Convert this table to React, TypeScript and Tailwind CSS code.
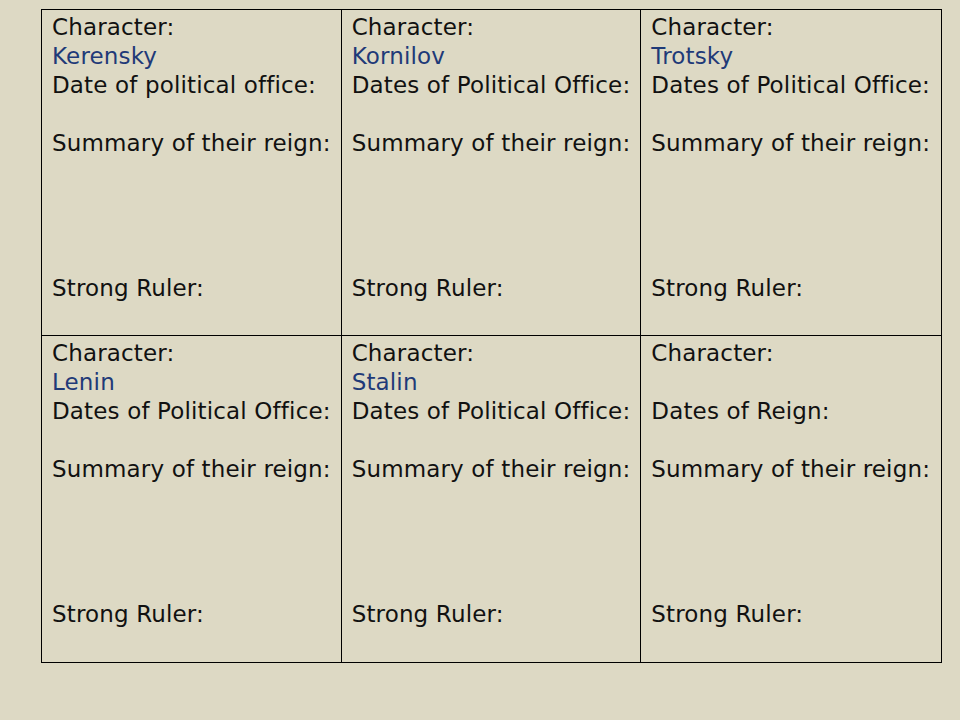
import React from 'react';

type Cell = {
  name: string;
  dates: string;
};

const cells: Cell[] = [
  { name: 'Kerensky', dates: 'Date of political office:' },
  { name: 'Kornilov', dates: 'Dates of Political Office:' },
  { name: 'Trotsky', dates: 'Dates of Political Office:' },
  { name: 'Lenin', dates: 'Dates of Political Office:' },
  { name: 'Stalin', dates: 'Dates of Political Office:' },
  { name: '', dates: 'Dates of Reign:' },
];

const Line: React.FC<{ children?: React.ReactNode; blue?: boolean }> = ({ children, blue }) => (
  <div className={`h-[29px] whitespace-nowrap ${blue ? 'text-[#1f3a78]' : 'text-[#111111]'}`}>
    {children}
  </div>
);

const CharacterCell: React.FC<{ cell: Cell; index: number }> = ({ cell, index }) => {
  const col = index % 3;
  const row = Math.floor(index / 3);
  return (
    <div
      className={`pl-[10px] pt-[3px] border-black ${col < 2 ? 'border-r' : ''} ${row === 0 ? 'border-b' : ''}`}
    >
      <Line>Character:</Line>
      <Line blue>{cell.name}</Line>
      <Line>{cell.dates}</Line>
      <Line />
      <Line>Summary of their reign:</Line>
      <Line />
      <Line />
      <Line />
      <Line />
      <Line>Strong Ruler:</Line>
    </div>
  );
};

export default function App() {
  return (
    <div className="w-[960px] h-[720px] bg-[#ddd9c4] pt-[9px] pl-[41px] font-['DejaVu_Sans',sans-serif] text-[23px] leading-[29px] tracking-[0.15px]">
      <div className="w-[901px] h-[654px] border border-black grid grid-cols-3 grid-rows-2">
        {cells.map((cell, i) => (
          <CharacterCell key={i} cell={cell} index={i} />
        ))}
      </div>
    </div>
  );
}
